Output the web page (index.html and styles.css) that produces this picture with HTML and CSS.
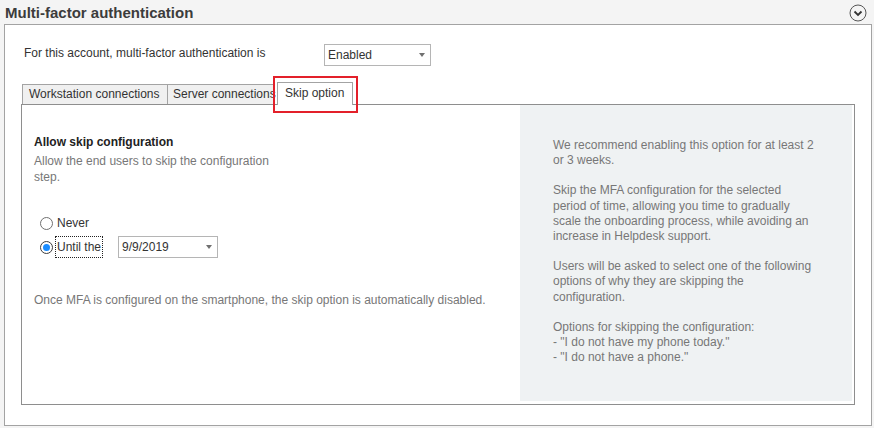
FILE: index.html
```html
<!DOCTYPE html>
<html lang="en">
<head>
    <meta charset="UTF-8">
    <meta name="viewport" content="width=device-width, initial-scale=1.0">
    <title>Multi-factor authentication</title>
    <link rel="stylesheet" href="styles.css">
</head>
<body>
    <div class="section-header">
        <h1>Multi-factor authentication</h1>
        <svg class="collapse-icon" width="18" height="18" viewBox="0 0 18 18">
            <circle cx="9" cy="9" r="8" fill="none" stroke="#555" stroke-width="1"/>
            <path d="M5.5 7.5 L9 11 L12.5 7.5" fill="none" stroke="#333" stroke-width="1.8"/>
        </svg>
    </div>

    <div class="panel">
        <div class="account-row">
            <span class="account-label">For this account, multi-factor authentication is</span>
            <div class="dropdown mfa-state">
                <span>Enabled</span>
                <span class="caret"></span>
            </div>
        </div>

        <div class="tabs">
            <div class="tab tab-workstation">Workstation connections</div>
            <div class="tab tab-server">Server connections</div>
            <div class="tab active">
                Skip option
                <span class="highlight"></span>
            </div>
        </div>

        <div class="tab-body">
            <div class="settings">
                <div class="setting-title">Allow skip configuration</div>
                <div class="setting-desc">Allow the end users to skip the configuration step.</div>

                <div class="radio-group">
                    <label class="radio-row">
                        <span class="radio"></span>
                        <span>Never</span>
                    </label>
                    <label class="radio-row">
                        <span class="radio checked"></span>
                        <span class="focused">Until the</span>
                        <div class="dropdown date-pick">
                            <span>9/9/2019</span>
                            <span class="caret"></span>
                        </div>
                    </label>
                </div>

                <p class="note">Once MFA is configured on the smartphone, the skip option is automatically disabled.</p>
            </div>

            <div class="help">
                <p>We recommend enabling this option for at least 2<br>or 3 weeks.</p>
                <p>Skip the MFA configuration for the selected<br>period of time, allowing you time to gradually<br>scale the onboarding process, while avoiding an<br>increase in Helpdesk support.</p>
                <p>Users will be asked to select one of the following<br>options of why they are skipping the<br>configuration.</p>
                <p>Options for skipping the configuration:<br>- "I do not have my phone today."<br>- "I do not have a phone."</p>
            </div>
        </div>
    </div>
</body>
</html>
```

FILE: styles.css
```css
:root {
    --text-color: #333333;
    --muted-color: #777777;
    --border-color: #a3a3a3;
    --tab-color: #f0f0f0;
    --help-color: #eff2f3;
    --accent-color: #1a8cff;
}

body, html {
    margin: 0;
    padding: 0;
    background-color: #f4f4f4;
    font-family: "Segoe UI", "Liberation Sans", sans-serif;
    font-size: 12px;
    color: var(--text-color);
}

.section-header {
    height: 24px;
    display: flex;
    align-items: center;
    justify-content: space-between;
    padding: 0 7px 0 5px;
}

.section-header h1 {
    margin: 0;
    font-size: 15px;
    font-weight: bold;
    color: #3c3c3c;
}

.collapse-icon {
    display: block;
    margin-top: 1px;
}

.panel {
    margin: 0 2px 2px 4px;
    background-color: #ffffff;
    border: 1px solid var(--border-color);
    padding: 19px 16px 20px 16px;
}

.account-row {
    display: flex;
    align-items: center;
    height: 22px;
    padding-left: 3px;
}

.account-label {
    width: 300px;
    margin-top: -4px;
}

.dropdown {
    box-sizing: border-box;
    height: 22px;
    border: 1px solid #b5b5b5;
    background-color: #ffffff;
    display: flex;
    align-items: center;
    justify-content: space-between;
    padding: 0 5px 0 3px;
}

.caret {
    width: 0;
    height: 0;
    border-left: 3.5px solid transparent;
    border-right: 3.5px solid transparent;
    border-top: 4px solid #707070;
}

.mfa-state {
    width: 107px;
}

.tabs {
    display: flex;
    align-items: flex-end;
    margin-top: 16px;
    padding-left: 1px;
    position: relative;
    z-index: 1;
}

.tab {
    box-sizing: border-box;
    height: 20px;
    line-height: 18px;
    padding: 0 6px;
    background-color: var(--tab-color);
    border: 1px solid var(--border-color);
    border-bottom: none;
    margin-right: -1px;
    white-space: nowrap;
}

.tab-workstation {
    width: 146px;
}

.tab-server {
    width: 108px;
    padding: 0 5px;
}

.tab.active {
    position: relative;
    width: 76px;
    height: 23px;
    line-height: 20px;
    margin: 0 0 -1px 3px;
    padding: 0 7px;
    background-color: #ffffff;
}

.highlight {
    position: absolute;
    left: -5px;
    top: -7px;
    width: 81px;
    height: 33px;
    border: 2px solid #e3202a;
}

.tab-body {
    height: 296px;
    border: 1px solid #8e8e8e;
    display: grid;
    grid-template-columns: 498px 1fr;
    padding: 0 2px 3px 0;
}

.settings {
    padding: 29px 0 0 12px;
}

.setting-title {
    font-weight: bold;
    line-height: 16px;
    color: #222222;
}

.setting-desc {
    margin-top: 3px;
    width: 245px;
    line-height: 16px;
    color: var(--muted-color);
}

.radio-group {
    margin-top: 26px;
    padding-left: 6px;
}

.radio-row {
    display: flex;
    align-items: center;
    height: 24px;
    gap: 4px;
}

.radio {
    box-sizing: border-box;
    width: 13px;
    height: 13px;
    border-radius: 50%;
    border: 1px solid #707070;
    background-color: #ffffff;
    display: flex;
    align-items: center;
    justify-content: center;
}

.radio.checked {
    border-color: #3c3c3c;
}

.radio.checked::after {
    content: '';
    width: 7px;
    height: 7px;
    border-radius: 50%;
    background-color: var(--accent-color);
}

.focused {
    outline: 1px dotted #222222;
    outline-offset: 1px;
    line-height: 18px;
}

.date-pick {
    width: 100px;
    margin-left: 13px;
}

.note {
    margin: 33px 0 0;
    line-height: 16px;
    color: var(--muted-color);
}

.help {
    background-color: var(--help-color);
    padding: 33px 20px 0 33px;
    color: var(--muted-color);
    line-height: 15.15px;
}

.help p {
    margin: 0 0 15.15px;
}
```
